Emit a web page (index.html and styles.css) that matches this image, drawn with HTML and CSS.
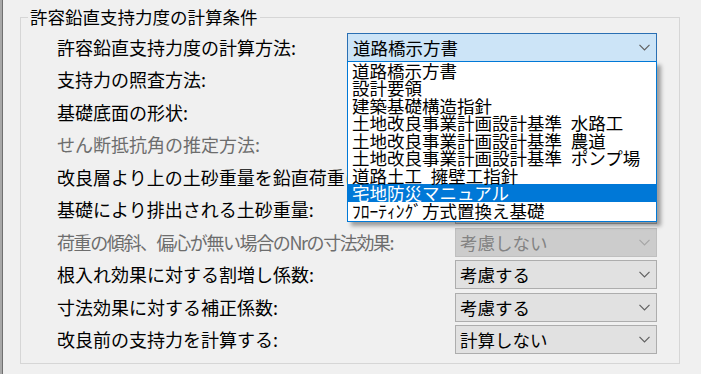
FILE: index.html
```html
<!DOCTYPE html>
<html lang="ja">

<head>
    <meta charset="UTF-8">
    <title>許容鉛直支持力度の計算条件</title>
    <link rel="stylesheet" href="styles.css">
</head>

<body>
    <fieldset class="group">
        <legend>許容鉛直支持力度の計算条件</legend>

        <!-- 計算方法 (開いた状態) -->
        <div class="row">
            <span class="label">許容鉛直支持力度の計算方法:</span>
            <div class="combo combo-wide combo-open">
                <span class="value">道路橋示方書</span>
                <svg class="arrow" width="11" height="7" viewBox="0 0 11 7"><path d="M0.5 0.8 L5.5 5.8 L10.5 0.8" /></svg>
                <ul class="droplist">
                    <li>道路橋示方書</li>
                    <li>設計要領</li>
                    <li>建築基礎構造指針</li>
                    <li>土地改良事業計画設計基準&ensp;水路工</li>
                    <li>土地改良事業計画設計基準&ensp;農道</li>
                    <li>土地改良事業計画設計基準&ensp;ポンプ場</li>
                    <li>道路土工&ensp;擁壁工指針</li>
                    <li class="selected">宅地防災マニュアル</li>
                    <li>ﾌﾛｰﾃｨﾝｸﾞ方式置換え基礎</li>
                </ul>
            </div>
        </div>

        <div class="row">
            <span class="label">支持力の照査方法:</span>
            <div class="combo">
                <span class="value">極限支持力</span>
                <svg class="arrow" width="11" height="7" viewBox="0 0 11 7"><path d="M0.5 0.8 L5.5 5.8 L10.5 0.8" /></svg>
            </div>
        </div>

        <div class="row">
            <span class="label">基礎底面の形状:</span>
            <div class="combo">
                <span class="value">帯状</span>
                <svg class="arrow" width="11" height="7" viewBox="0 0 11 7"><path d="M0.5 0.8 L5.5 5.8 L10.5 0.8" /></svg>
            </div>
        </div>

        <div class="row disabled">
            <span class="label">せん断抵抗角の推定方法:</span>
            <div class="combo">
                <span class="value">考慮しない</span>
                <svg class="arrow" width="11" height="7" viewBox="0 0 11 7"><path d="M0.5 0.8 L5.5 5.8 L10.5 0.8" /></svg>
            </div>
        </div>

        <div class="row">
            <span class="label">改良層より上の土砂重量を鉛直荷重に考慮する:</span>
            <div class="combo">
                <span class="value">考慮する</span>
                <svg class="arrow" width="11" height="7" viewBox="0 0 11 7"><path d="M0.5 0.8 L5.5 5.8 L10.5 0.8" /></svg>
            </div>
        </div>

        <div class="row">
            <span class="label">基礎により排出される土砂重量:</span>
            <div class="combo">
                <span class="value">考慮する</span>
                <svg class="arrow" width="11" height="7" viewBox="0 0 11 7"><path d="M0.5 0.8 L5.5 5.8 L10.5 0.8" /></svg>
            </div>
        </div>

        <div class="row disabled">
            <span class="label label-tight">荷重の傾斜、偏心が無い場合のNrの寸法効果:</span>
            <div class="combo">
                <span class="value">考慮しない</span>
                <svg class="arrow" width="11" height="7" viewBox="0 0 11 7"><path d="M0.5 0.8 L5.5 5.8 L10.5 0.8" /></svg>
            </div>
        </div>

        <div class="row">
            <span class="label">根入れ効果に対する割増し係数:</span>
            <div class="combo">
                <span class="value">考慮する</span>
                <svg class="arrow" width="11" height="7" viewBox="0 0 11 7"><path d="M0.5 0.8 L5.5 5.8 L10.5 0.8" /></svg>
            </div>
        </div>

        <div class="row">
            <span class="label">寸法効果に対する補正係数:</span>
            <div class="combo">
                <span class="value">考慮する</span>
                <svg class="arrow" width="11" height="7" viewBox="0 0 11 7"><path d="M0.5 0.8 L5.5 5.8 L10.5 0.8" /></svg>
            </div>
        </div>

        <div class="row">
            <span class="label">改良前の支持力を計算する:</span>
            <div class="combo">
                <span class="value">計算しない</span>
                <svg class="arrow" width="11" height="7" viewBox="0 0 11 7"><path d="M0.5 0.8 L5.5 5.8 L10.5 0.8" /></svg>
            </div>
        </div>
    </fieldset>
</body>

</html>
```

FILE: styles.css
```css
body {
    margin: 0;
    height: 374px;
    box-sizing: border-box;
    background-color: #f0f0f0;
    border-left: 2px solid #a8a8a8; /* ウィンドウ左端 */
    box-shadow: inset 1px 0 0 #707070;
    padding-left: 1px;
    padding-top: 7px;
    font-family: "Noto Sans CJK JP", "Noto Sans", sans-serif;
    font-size: 17.5px;
    color: #000;
    overflow: hidden;
}

/* グループボックス */
.group {
    width: 660px;
    box-sizing: border-box;
    margin: 0 0 0 17px;
    padding: 4px 22px 7px 7px;
    border: 1px solid #d6d6d6;
    min-width: 0;
}

.group legend {
    padding: 0 2px;
    line-height: 20px;
    height: 20px;
}

.row {
    display: flex;
    align-items: center;
    height: 32.5px;
    padding-left: 29px;
}

.label {
    flex: 1;
    min-width: 0;
    white-space: nowrap;
    overflow: hidden;
    font-size: 18px;
    line-height: 27px;
    margin-right: 4px;
}

.label-tight {
    letter-spacing: -1.4px;
}

.disabled .label {
    color: #6d6d6d;
}

/* コンボボックス */
.combo {
    width: 202px;
    height: 29px;
    box-sizing: border-box;
    flex-shrink: 0;
    display: flex;
    align-items: center;
    padding: 0 6px 0 4px;
    background-color: #e1e1e1;
    border: 1px solid #adadad;
    white-space: nowrap;
}

.combo .value {
    flex: 1;
    line-height: 27px;
}

.combo .arrow path {
    fill: none;
    stroke: #606060;
    stroke-width: 1.2;
}

.combo-wide {
    width: 310px;
    padding-left: 5px;
}

.combo-open {
    position: relative;
    background-color: #cce4f7;
    border-color: #2a6fb3;
}

.disabled .combo {
    background-color: #cccccc;
    border-color: #bfbfbf;
    color: #838383;
}

.disabled .combo .arrow path {
    stroke: #a6a6a6;
}

/* ドロップダウン一覧 */
.droplist {
    position: absolute;
    top: 100%;
    left: -1px;
    width: 310px;
    box-sizing: border-box;
    margin: 0;
    padding: 0 0 2px 0;
    list-style: none;
    background-color: #fff;
    border: 1px solid #0078d7;
    box-shadow: 4px 4px 4px rgba(0, 0, 0, 0.35);
    z-index: 10;
}

.droplist li {
    height: 17.5px;
    line-height: 17.5px;
    padding-left: 4px;
    color: #000;
}

.droplist li.selected {
    background-color: #0078d7;
    color: #fff;
}
```
